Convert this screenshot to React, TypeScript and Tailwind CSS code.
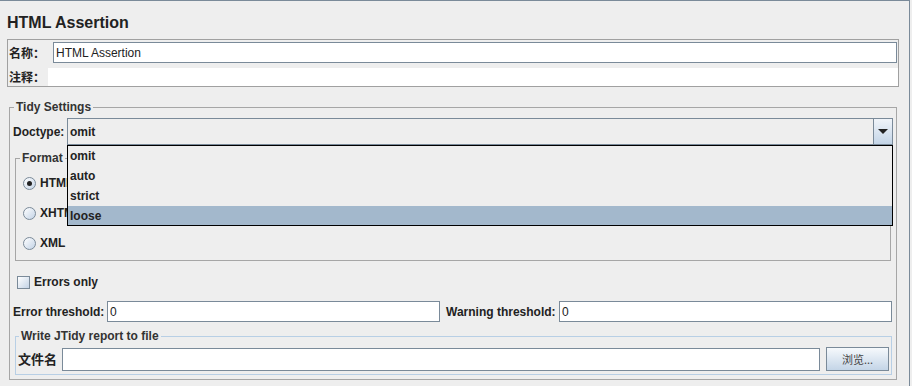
import React from 'react';

const items = ['omit', 'auto', 'strict', 'loose'];

function TextField({ value = '', className = '' }: { value?: string; className?: string }) {
  return (
    <div className={`flex items-center bg-white border border-[#7a8a99] pl-[2px] text-[12px] font-normal text-[#222] ${className}`}>
      {value}
    </div>
  );
}

function Radio({ checked = false, label }: { checked?: boolean; label: string }) {
  return (
    <div className="h-[30px] flex items-center gap-[4px]">
      <span className="w-[13px] h-[13px] rounded-full border border-[#7a8a99] bg-linear-to-br from-white to-[#c3d3e6] flex items-center justify-center">
        {checked && <span className="w-[5px] h-[5px] rounded-full bg-[#222]" />}
      </span>
      <span className="font-bold">{label}</span>
    </div>
  );
}

function Legend({ children, className = '' }: { children: React.ReactNode; className?: string }) {
  return <legend className={`px-[2px] text-[12px] leading-[14px] font-bold text-[#333] ${className}`}>{children}</legend>;
}

export default function App() {
  return (
    <div className="w-[912px] h-[386px] bg-[#eeeeee] flex overflow-hidden text-[12px] text-[#222] font-['Liberation_Sans','Noto_Sans_CJK_SC',sans-serif]">
      <div className="w-[910px] h-full border-t border-r border-[#7a8a99] flex flex-col">
        {/* title */}
        <div className="pl-[7px] pt-[12px] text-[16px] leading-[20px] font-bold text-[#222]">HTML Assertion</div>

        {/* name / comment */}
        <div className="mt-[6px] ml-[7px] w-[892px] h-[48px] border border-[#a0a0a0] flex flex-col">
          <div className="mt-[2px] h-[21px] flex items-center">
            <span className="w-[45px] pl-[1px] font-bold font-['Noto_Sans_CJK_SC',sans-serif]">名称：</span>
            <TextField value="HTML Assertion" className="flex-1 h-[21px] mr-[1px]" />
          </div>
          <div className="mt-[5px] h-[18px] flex items-center">
            <span className="w-[40px] pl-[1px] font-bold font-['Noto_Sans_CJK_SC',sans-serif]">注释：</span>
            <div className="flex-1 h-full bg-white" />
          </div>
        </div>

        {/* Tidy settings */}
        <fieldset className="mt-[13px] ml-[9px] w-[888px] border border-[#a6a6a6]">
          <Legend className="ml-[4px]">Tidy Settings</Legend>
          <div className="px-[3px] pt-[4px] pb-[4px] flex flex-col">
            <div className="flex items-center">
              <span className="w-[54px] font-bold">Doctype:</span>
              <div className="relative flex-1 h-[27px] border border-[#7a8a99] bg-[#eeeeee] flex">
                <div className="flex-1 pl-[2px] flex items-center font-bold">omit</div>
                <div className="w-[19px] border-l border-[#7a8a99] bg-linear-to-b from-[#f0f4f9] to-[#c4d5e7] flex items-center justify-center">
                  <svg width="10" height="5" viewBox="0 0 10 5">
                    <polygon points="0,0 10,0 5,5" fill="#222" />
                  </svg>
                </div>
                <div className="absolute left-[-1px] right-[-1px] top-[26px] h-[81px] border border-black bg-[#eeeeee] overflow-hidden z-10">
                  {items.map((it) => (
                    <div
                      key={it}
                      className={`h-[20px] pl-[2px] flex items-center font-bold ${it === 'loose' ? 'bg-[#a3b8cc]' : ''}`}
                    >
                      {it}
                    </div>
                  ))}
                </div>
              </div>
            </div>

            <fieldset className="mt-[6px] ml-[2px] mr-[2px] h-[110px] border border-[#a6a6a6]">
              <Legend className="ml-[4px]">Format</Legend>
              <div className="pt-[3px] pl-[7px] flex flex-col">
                <Radio checked label="HTML" />
                <Radio label="XHTML" />
                <Radio label="XML" />
              </div>
            </fieldset>

            <div className="mt-[11px] h-[20px] ml-[4px] flex items-center gap-[4px]">
              <span className="w-[13px] h-[13px] border border-[#7a8a99] bg-linear-to-br from-white to-[#c3d3e6]" />
              <span className="font-bold">Errors only</span>
            </div>

            <div className="mt-[9px] h-[21px] flex items-center">
              <span className="w-[94px] font-bold">Error threshold:</span>
              <TextField value="0" className="flex-1 h-[21px]" />
              <span className="ml-[6px] w-[113px] font-bold">Warning threshold:</span>
              <TextField value="0" className="flex-1 h-[21px] mr-[1px]" />
            </div>

            <fieldset className="mt-[7px] ml-[2px] mr-[1px] border border-[#b8cfe5]">
              <Legend className="ml-[3px]">Write JTidy report to file</Legend>
              <div className="pt-[4px] pb-[3px] px-[2px] flex items-center">
                <span className="w-[44px] text-[13px] font-bold font-['Noto_Sans_CJK_SC',sans-serif]">文件名</span>
                <TextField className="flex-1 h-[23px]" />
                <button className="ml-[6px] w-[63px] h-[24px] border border-[#7a8a99] bg-linear-to-b from-[#f6f9fc] to-[#c4d5e7] text-[11px] text-[#444] font-['Noto_Sans_CJK_SC',sans-serif]">
                  浏览...
                </button>
              </div>
            </fieldset>
          </div>
        </fieldset>
      </div>
    </div>
  );
}
